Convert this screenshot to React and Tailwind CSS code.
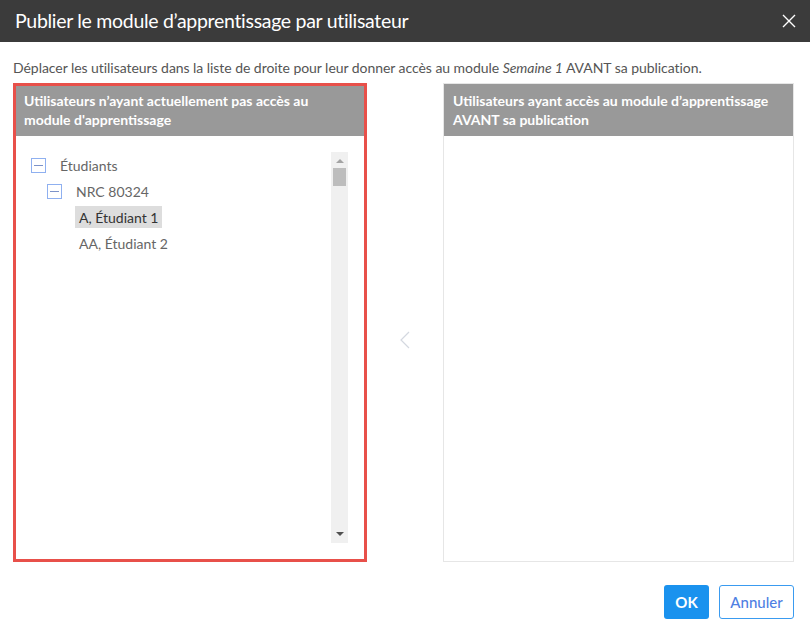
import { useState } from 'react';

function MinusBox() {
  return (
    <span className="w-[15px] h-[15px] border border-[#8fb0f0] flex items-center justify-center shrink-0">
      <span className="w-[9px] h-px bg-[#7d93c9]" />
    </span>
  );
}

export default function App() {
  const [selected, setSelected] = useState('A, Étudiant 1');

  return (
    <div
      className="w-[810px] h-[634px] bg-white flex flex-col"
      style={{ fontFamily: 'Lato, "Noto Sans", sans-serif' }}
    >
      {/* Header */}
      <div className="h-[42px] bg-[#3b3b3b] flex items-center justify-between pl-[15px] pr-[14px]">
        <h1 className="text-white text-[19.5px] tracking-[-0.3px]">Publier le module d’apprentissage par utilisateur</h1>
        <button className="text-white">
          <svg width="14" height="14" viewBox="0 0 14 14" stroke="currentColor" strokeWidth="1.4">
            <path d="M1 1l12 12M13 1L1 13" />
          </svg>
        </button>
      </div>

      <div className="flex-1 flex flex-col px-[13px] pt-[16px]">
        <p className="text-[14px] text-[#555] leading-[20px] tracking-[-0.05px]">
          Déplacer les utilisateurs dans la liste de droite pour leur donner accès au module <i>Semaine 1</i> AVANT sa publication.
        </p>

        <div className="flex mt-[5px] h-[479px]">
          {/* Left panel */}
          <div className="w-[354px] border-[3px] border-[#e8504a] flex flex-col">
            <div className="h-[50px] bg-[#999] px-[8px] py-[5px] text-white font-bold text-[14px] leading-[19px]">
              Utilisateurs n’ayant actuellement pas accès au module d'apprentissage
            </div>
            <div className="flex-1 flex p-[16px] pr-[16px] pl-[15px]">
              <div className="flex-1 text-[14px] text-[#666]">
                <div className="h-[26px] flex items-center gap-[14px]">
                  <MinusBox />
                  <span>Étudiants</span>
                </div>
                <div className="h-[26px] flex items-center gap-[14px] pl-[16px]">
                  <MinusBox />
                  <span>NRC 80324</span>
                </div>
                {['A, Étudiant 1', 'AA, Étudiant 2'].map((name) => (
                  <div key={name} className="h-[26px] flex items-center pl-[44px]">
                    <button
                      onClick={() => setSelected(name)}
                      className={`px-[4px] h-[22px] ${selected === name ? 'bg-[#ddd] text-[#333]' : 'text-[#666]'}`}
                    >
                      {name}
                    </button>
                  </div>
                ))}
              </div>
              <div className="w-[17px] bg-[#f0f0f0] flex flex-col items-center">
                <span className="mt-[7px] w-0 h-0 border-x-[4px] border-x-transparent border-b-[4px] border-b-[#a3a3a3]" />
                <span className="mt-[5px] w-[13px] h-[18px] bg-[#bdbdbd]" />
                <span className="flex-1" />
                <span className="mb-[7px] w-0 h-0 border-x-[4px] border-x-transparent border-t-[4px] border-t-[#505050]" />
              </div>
            </div>
          </div>

          {/* Middle */}
          <div className="w-[76px] flex items-center justify-center pt-[34px]">
            <svg width="12" height="18" viewBox="0 0 12 18" fill="none" stroke="#d4d8e0" strokeWidth="1.2">
              <path d="M10 1L2 9l8 8" />
            </svg>
          </div>

          {/* Right panel */}
          <div className="w-[351px] border border-[#e6e6e6] flex flex-col">
            <div className="h-[52px] bg-[#999] px-[9px] py-[7px] text-white font-bold text-[14px] leading-[19px]">
              Utilisateurs ayant accès au module d’apprentissage AVANT sa publication
            </div>
            <div className="flex-1" />
          </div>
        </div>

        <div className="flex justify-end gap-[10px] mt-[23px] pr-[3px]">
          <button className="w-[45px] h-[34px] rounded-[3px] bg-[#1a92ee] text-white font-bold text-[15px]">OK</button>
          <button className="w-[75px] h-[34px] rounded-[3px] border border-[#3a9bf0] text-[#4f7fe3] text-[15px] font-medium">Annuler</button>
        </div>
      </div>
    </div>
  );
}
